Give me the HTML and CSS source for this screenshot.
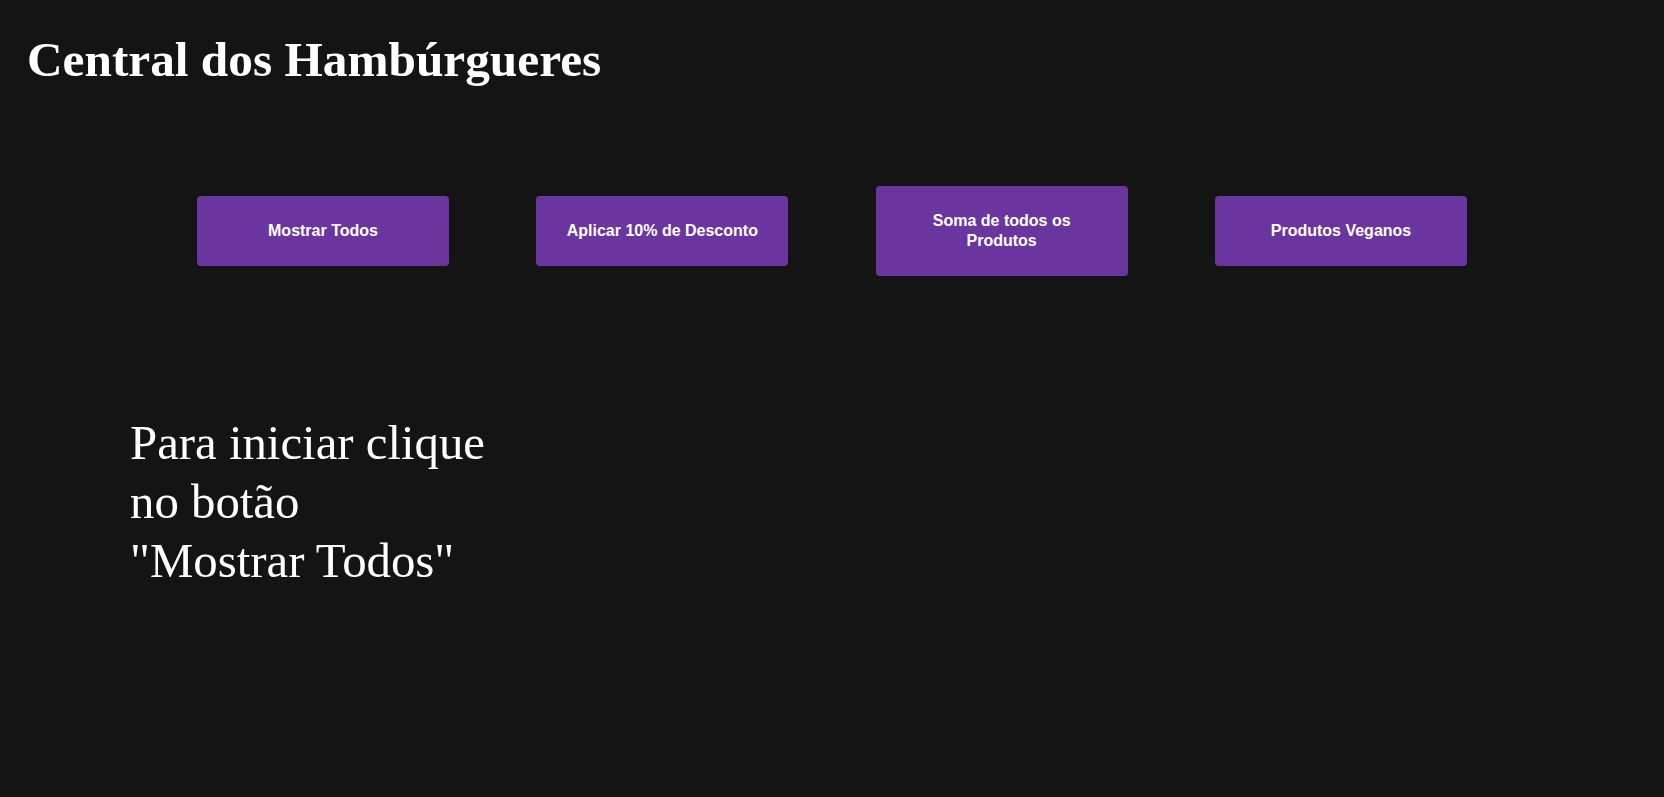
FILE: index.html
```html
<!DOCTYPE html>
<html lang="pt-BR">
<head>
<meta charset="utf-8">
<title>Central dos Hambúrgueres</title>
<link rel="stylesheet" href="styles.css">
</head>
<body>
  <header class="header">
    <h1 class="title">Central dos Hambúrgueres</h1>
  </header>
  <nav class="actions">
    <button class="btn">Mostrar Todos</button>
    <button class="btn">Aplicar 10% de Desconto</button>
    <button class="btn">Soma de todos os Produtos</button>
    <button class="btn">Produtos Veganos</button>
  </nav>
  <main class="list">
    <p class="hint">Para iniciar clique no botão <span class="nowrap">"Mostrar Todos"</span></p>
  </main>
</body>
</html>
```
FILE: styles.css
```css
html, body {
  margin: 0;
  padding: 0;
}

body {
  background: #141414;
  color: #ffffff;
  font-family: "Liberation Serif", "Times New Roman", serif;
  min-height: 100vh;
}

.header {
  padding: 32px 0 0 27px;
}

.title {
  margin: 0;
  font-size: 49.3px;
  line-height: 56px;
  font-weight: bold;
}

.actions {
  display: flex;
  justify-content: center;
  align-items: center;
  gap: 87.33px;
  margin-top: 98px;
}

.btn {
  width: 252px;
  padding: 25px 25px;
  border: none;
  border-radius: 4px;
  background: #6b35a0;
  color: #ffffff;
  font-family: "Liberation Sans", Arial, sans-serif;
  font-size: 16px;
  font-weight: bold;
  line-height: 20px;
  cursor: pointer;
}

.list {
  padding-left: 130px;
  margin-top: 138px;
}

.hint {
  margin: 0;
  width: 380px;
  font-size: 48.8px;
  line-height: 59px;
}

.nowrap {
  white-space: nowrap;
}
```
